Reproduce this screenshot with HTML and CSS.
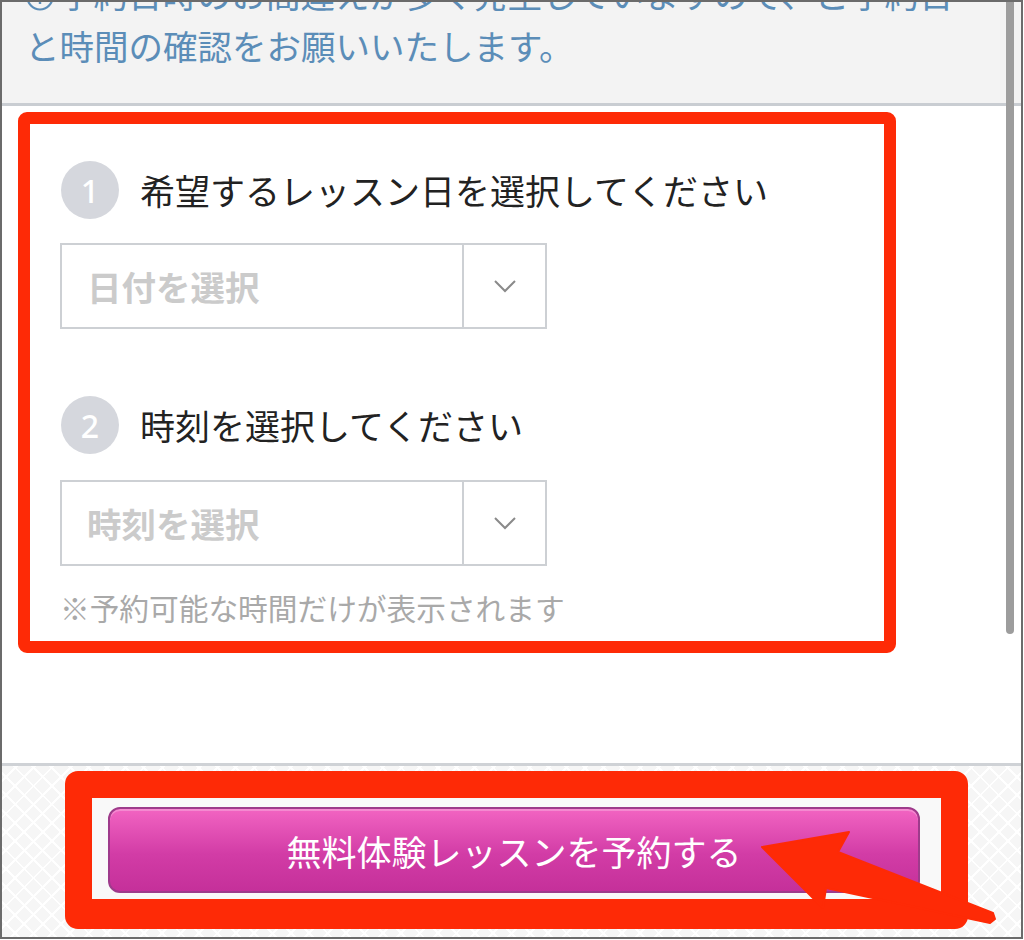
FILE: index.html
```html
<!DOCTYPE html>
<html lang="ja">
<head>
    <meta charset="UTF-8">
    <meta name="viewport" content="width=device-width, initial-scale=1.0">
    <title>無料体験レッスン予約</title>
    <link rel="stylesheet" href="styles.css">
</head>
<body>
    <div class="screen">
        <div class="notice">
            <p>
                <svg class="info-icon" viewBox="0 0 30 30" width="30" height="30"><circle cx="15" cy="15" r="12.5" fill="none" stroke="#5b8db8" stroke-width="2.2"/><rect x="13.8" y="12" width="2.4" height="10" fill="#5b8db8"/><circle cx="15" cy="8.5" r="1.6" fill="#5b8db8"/></svg>予約日時のお間違えが多く発生していますので、ご予約日<br>
                と時間の確認をお願いいたします。
            </p>
        </div>

        <div class="highlight">
            <div class="step">
                <span class="step-num">1</span>
                <h3>希望するレッスン日を選択してください</h3>
            </div>
            <div class="select-box">
                <span class="placeholder">日付を選択</span>
                <span class="select-arrow">
                    <svg viewBox="0 0 24 14" width="24" height="14"><polyline points="2,2 12,12 22,2" fill="none" stroke="#8a8a8a" stroke-width="2"/></svg>
                </span>
            </div>

            <div class="step step-second">
                <span class="step-num">2</span>
                <h3>時刻を選択してください</h3>
            </div>
            <div class="select-box select-second">
                <span class="placeholder">時刻を選択</span>
                <span class="select-arrow">
                    <svg viewBox="0 0 24 14" width="24" height="14"><polyline points="2,2 12,12 22,2" fill="none" stroke="#8a8a8a" stroke-width="2"/></svg>
                </span>
            </div>
            <p class="note">※予約可能な時間だけが表示されます</p>
        </div>

        <div class="footer">
            <div class="highlight-btn">
                <button type="button" class="reserve-btn">無料体験レッスンを予約する</button>
            </div>
        </div>

        <div class="scrollbar"></div>

        <svg class="arrow" viewBox="750 825 250 105" width="250" height="105">
            <polygon points="762,847 849,832 838,852 993,913 995,919 990,923 826,888 823,908" fill="#fe2a06" stroke="#fe2a06" stroke-width="2" stroke-linejoin="round"/>
        </svg>
    </div>
</body>
</html>
```

FILE: styles.css
```css
* {
    box-sizing: border-box;
}
body {
    margin: 0;
    background-color: #ffffff;
    font-family: "Noto Sans CJK JP", "Noto Sans", sans-serif;
}
.screen {
    position: relative;
    width: 1023px;
    height: 939px;
    border: 2px solid #6b6b6b;
    background-color: #ffffff;
    overflow: hidden;
}
.notice {
    height: 104px;
    background-color: #f3f3f3;
    border-bottom: 3px solid #c9cdd2;
    overflow: hidden;
}
.notice p {
    margin: -35px 0 0 0;
    padding-left: 23px;
    font-size: 34.5px;
    line-height: 52px;
    color: #5b8db8;
    white-space: nowrap;
}
.info-icon {
    vertical-align: -4px;
    margin-right: 4px;
}
.highlight {
    width: 878px;
    margin: 6px 0 0 16px;
    padding: 37px 30px 13px 30px;
    border: 12px solid #fe2a06;
    border-radius: 9px;
}
.step {
    display: flex;
    align-items: center;
    gap: 21px;
}
.step-second {
    margin-top: 67px;
}
.step-num {
    width: 58px;
    height: 58px;
    margin-left: 1px;
    border-radius: 50%;
    background-color: #d5d7dd;
    color: #ffffff;
    font-family: "Noto Sans", "Liberation Sans", sans-serif;
    font-size: 32px;
    font-weight: 500;
    display: flex;
    align-items: center;
    justify-content: center;
}
.step h3 {
    margin: 0;
    font-size: 35px;
    font-weight: 400;
    color: #222222;
    line-height: 50px;
}
.select-box {
    display: flex;
    width: 487px;
    height: 86px;
    margin-top: 24px;
    border: 2px solid #cdd0d4;
}
.select-second {
    margin-top: 26px;
}
.placeholder {
    flex: 1;
    display: flex;
    align-items: center;
    padding-left: 25px;
    font-size: 34.5px;
    font-weight: 700;
    color: #cbcbcb;
}
.select-arrow {
    width: 83px;
    border-left: 2px solid #cdd0d4;
    display: flex;
    align-items: center;
    justify-content: center;
}
.note {
    margin: 22px 0 0 0;
    font-size: 29.7px;
    line-height: 40px;
    color: #a9a9a9;
}
.footer {
    height: 174px;
    margin-top: 110px;
    border-top: 3px solid #cfd2d6;
    background-color: #f6f6f6;
    background-image:
        repeating-linear-gradient(45deg, transparent 0 11px, #ffffff 11px 13px),
        repeating-linear-gradient(-45deg, transparent 0 11px, #ffffff 11px 13px);
    padding-top: 5px;
}
.highlight-btn {
    width: 903px;
    height: 158px;
    margin-left: 63px;
    border-style: solid;
    border-color: #fe2a06;
    border-width: 27px 27px 30px 27px;
    border-radius: 13px;
    padding: 9px 21px 6px 16px;
    background-color: #f9f9f9;
}
.reserve-btn {
    display: block;
    width: 812px;
    height: 86px;
    border: 2px solid #9e3b8b;
    border-radius: 12px;
    background: linear-gradient(#f264c2, #d23ca6 55%, #c5309a);
    box-shadow: inset 0 2px 0 rgba(255, 255, 255, 0.25);
    color: #ffffff;
    font-family: "Noto Sans CJK JP", "Noto Sans", sans-serif;
    font-size: 35px;
    font-weight: 400;
    cursor: pointer;
    padding: 0;
}
.scrollbar {
    position: absolute;
    top: 0;
    right: 7px;
    width: 8px;
    height: 632px;
    border-radius: 0 0 4px 4px;
    background-color: #9d9d9d;
}
.arrow {
    position: absolute;
    left: 748px;
    top: 823px;
}
```
